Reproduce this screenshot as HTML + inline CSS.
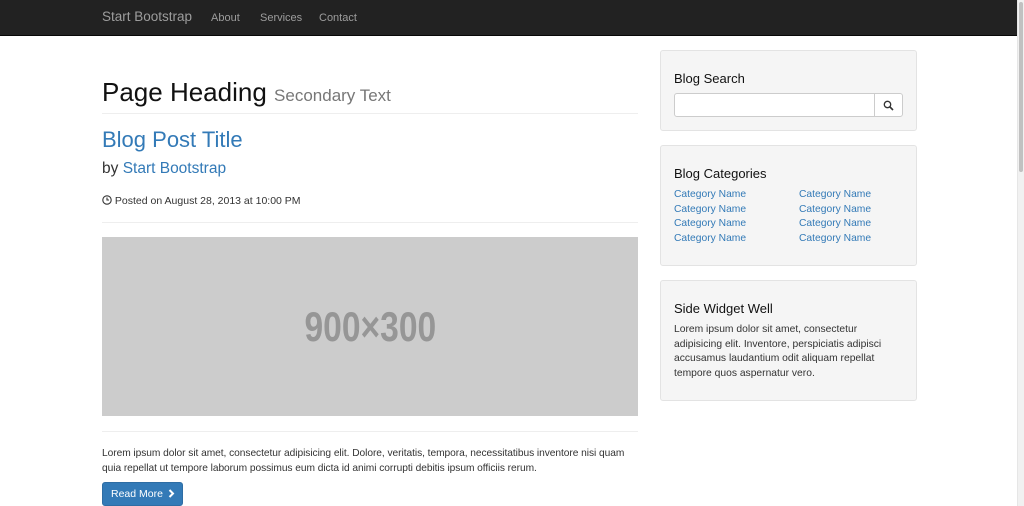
<!DOCTYPE html>
<html><head><meta charset="utf-8"><style>
*{box-sizing:border-box;margin:0;padding:0}
body{width:1024px;height:506px;overflow:hidden;background:#fff;font-family:"Liberation Sans",Helvetica,Arial,sans-serif;color:#333;position:relative}
.a{position:absolute;white-space:nowrap}
.nav{position:absolute;left:0;top:0;width:1017px;height:36px;background:#222;border-bottom:1px solid #080808}
.nav span{position:absolute;color:#9d9d9d;font-size:11px;top:12px}
hr{position:absolute;border:0;border-top:1px solid #eee;left:102px;width:536px;height:0}
.link{color:#337ab7}
.well{position:absolute;left:660px;width:257px;background:#f5f5f5;border:1px solid #e3e3e3;border-radius:3px}
.cat{position:absolute;color:#337ab7;font-size:10.3px;line-height:14.5px}
.sb{position:absolute;right:0;top:0;width:7px;height:506px;background:#f1f1f1;border-left:1px solid #e6e6e6}
</style></head><body>
<div class="nav">
<span style="left:102px;top:9px;font-size:13.5px">Start Bootstrap</span>
<span style="left:211px">About</span>
<span style="left:260px">Services</span>
<span style="left:319px">Contact</span>
</div>
<div class="a" style="left:102px;top:77px;font-size:26px;color:#111">Page Heading <span style="font-size:17px;color:#777">Secondary Text</span></div>
<hr style="top:113px">
<div class="a link" style="left:102px;top:127px;font-size:22px">Blog Post Title</div>
<div class="a" style="left:102px;top:160px;font-size:15.5px;color:#333">by <span class="link">Start Bootstrap</span></div>
<div class="a" style="left:102px;top:195px;font-size:10.5px;color:#333"><svg width="10" height="10" viewBox="0 0 10 10" style="vertical-align:-1px"><circle cx="5" cy="5" r="4.2" fill="none" stroke="#333" stroke-width="1.1"/><path d="M5 2.5V5H7" fill="none" stroke="#333" stroke-width="1.1"/></svg> Posted on August 28, 2013 at 10:00 PM</div>
<hr style="top:222px">
<div class="a" style="left:102px;top:237px;width:536px;height:179px;background:#ccc;display:flex;align-items:center;justify-content:center;font-weight:bold;font-size:42px;color:#969696"><span style="display:inline-block;transform:scaleX(0.8)">900×300</span></div>
<hr style="top:431px">
<div class="a" style="left:102px;top:446px;font-size:10.2px;line-height:15px;color:#333;letter-spacing:-0.05px">Lorem ipsum dolor sit amet, consectetur adipisicing elit. Dolore, veritatis, tempora, necessitatibus inventore nisi quam<br>quia repellat ut tempore laborum possimus eum dicta id animi corrupti debitis ipsum officiis rerum.</div>
<div class="a" style="left:102px;top:482px;width:81px;height:24px;background:#337ab7;border:1px solid #2e6da4;border-radius:3px;color:#fff;font-size:10.5px;line-height:22px;padding-left:8px">Read More <svg width="7" height="9" viewBox="0 0 7 9" style="vertical-align:-1px;margin-left:2px"><path d="M1.5 1L5 4.5L1.5 8" fill="none" stroke="#fff" stroke-width="2"/></svg></div>

<div class="well" style="top:50px;height:81px">
<div class="a" style="left:13px;top:20px;font-size:13px;color:#111">Blog Search</div>
<div class="a" style="left:13px;top:42px;width:201px;height:24px;background:#fff;border:1px solid #ccc;border-radius:3px 0 0 3px"></div>
<div class="a" style="left:213px;top:42px;width:29px;height:24px;background:#fff;border:1px solid #ccc;border-radius:0 3px 3px 0"><svg width="11" height="11" viewBox="0 0 11 11" style="position:absolute;left:8px;top:6px"><circle cx="4.5" cy="4.5" r="3.2" fill="none" stroke="#333" stroke-width="1.3"/><path d="M7 7L10 10" stroke="#333" stroke-width="1.6"/></svg></div>
</div>
<div class="well" style="top:145px;height:121px">
<div class="a" style="left:13px;top:20px;font-size:13px;color:#111">Blog Categories</div>
<div class="cat" style="left:13px;top:42px">Category Name<br>Category Name<br>Category Name<br>Category Name</div>
<div class="cat" style="left:138px;top:42px">Category Name<br>Category Name<br>Category Name<br>Category Name</div>
</div>
<div class="well" style="top:280px;height:121px">
<div class="a" style="left:13px;top:20px;font-size:13px;color:#111">Side Widget Well</div>
<div class="a" style="left:13px;top:42px;font-size:10.3px;line-height:14.5px;color:#333">Lorem ipsum dolor sit amet, consectetur<br>adipisicing elit. Inventore, perspiciatis adipisci<br>accusamus laudantium odit aliquam repellat<br>tempore quos aspernatur vero.</div>
</div>
<div class="sb"><div style="position:absolute;left:1px;top:2px;width:4px;height:170px;background:#c1c1c1;border-radius:2px"></div></div>
</body></html>
